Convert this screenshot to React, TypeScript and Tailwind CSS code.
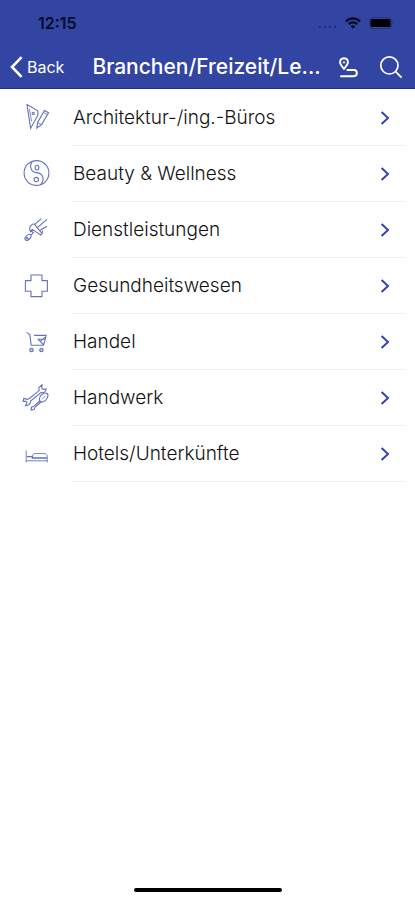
import type { ReactNode } from "react";

interface Category {
  id: number;
  name: string;
  icon: ReactNode;
}

const CATEGORIES: Category[] = [
  {
    id: 1,
    name: "Architektur-/ing.-Büros",
    icon: (
      <>
        <path d="M5 0.6 L15.4 6.6 C16.4 8.4 16.2 10 15.4 12 L8.6 24.4 Z" />
        <path d="M7.4 5 L9.6 17.4" strokeWidth="0.8" />
        <circle cx="11.2" cy="9.4" r="1.1" />
        <path d="M14.8 24 L15.6 18.4 L22.4 6.4 L26.6 8.8 L19.6 20.6 Z" />
        <path d="M15.6 18.4 L19.6 20.6 M21.4 8.4 L25.4 10.6" strokeWidth="0.8" />
      </>
    ),
  },
  {
    id: 2,
    name: "Beauty & Wellness",
    icon: (
      <>
        <circle cx="14.5" cy="13" r="12.4" />
        <path d="M10.6 1.4 C7 5.5 8.5 12 14.5 12.6 C21.5 13.4 23 20 18.6 24.6" />
        <ellipse cx="15" cy="7.6" rx="1.9" ry="2.4" />
        <circle cx="14.3" cy="19.6" r="2.2" />
      </>
    ),
  },
  {
    id: 3,
    name: "Dienstleistungen",
    icon: (
      <>
        <path d="M9.4 9.2 C11.4 7 13.6 8.2 14.2 10.4 L20 17.4 L18.8 19 L10.2 13.4 L8.6 15.6 C7.2 13.4 7.4 11 9.4 9.2 Z" />
        <path d="M12.4 8.6 L19.4 2.6 M15.6 11.4 L25 3.4 M18 14.2 L25 10.2 M20 17.4 L20.6 14.6" />
        <path d="M8.8 15 L11.4 16.6 L9 19.2" />
        <ellipse cx="6" cy="21.4" rx="2.2" ry="3.6" transform="rotate(46 6 21.4)" />
        <circle cx="5.2" cy="22.2" r="0.7" />
      </>
    ),
  },
  {
    id: 4,
    name: "Gesundheitswesen",
    icon: (
      <path d="M9 3 H20 V8.6 H25.4 V19.2 H20 V24.6 H9 V19.2 H3.4 V8.6 H9 Z" strokeLinejoin="round" />
    ),
  },
  {
    id: 5,
    name: "Handel",
    icon: (
      <>
        <path d="M4.6 4.4 L7.8 6.6 L9.2 17.2 H21.4" />
        <path d="M12 7.4 H24.2 L21.6 16.8 L16.2 11.2 H22.6 M18.4 13.4 L23 9.2" />
        <circle cx="9.5" cy="22" r="1.7" fill="currentColor" fillOpacity="0.4" />
        <circle cx="19.4" cy="22" r="1.7" fill="currentColor" fillOpacity="0.4" />
      </>
    ),
  },
  {
    id: 6,
    name: "Handwerk",
    icon: (
      <>
        <path d="M1.8 14.4 L5.4 15.4 L7 14.8 L17.2 6.6 L16.8 3.4 L20 0.8 L19.8 4.2 L21.4 5.4 L24.2 5 C23.6 8 21.6 9 19 8.6 L8.6 17 C8.6 19.8 6.8 21.6 3.4 21.6 L5 18.8 L4.2 17.2 L1.2 17.4 Z" />
        <path d="M17.4 15.2 C17.4 11 22.6 8.2 24.8 9.2 C27.4 10.8 25.2 16.4 20.8 18 C19 18.4 17.4 17.2 17.4 15.2 Z" />
        <path d="M20 15.4 L23.4 11.8" strokeWidth="0.8" />
        <path d="M17.8 17 L12 22.2 M18.8 18 L13 23.4 M12 22.2 L9.4 23.2 L9.2 26 L12 25.6 L13 23.4" />
      </>
    ),
  },
  {
    id: 7,
    name: "Hotels/Unterkünfte",
    icon: (
      <>
        <path d="M4.2 22.4 V10.4 M4.2 20.8 H25.2 M25.2 22.4 V15.6 L23.4 13.6 H12.4 L10.4 15.2" strokeWidth="0.9" />
        <path d="M4.8 16.6 H10.4 V18 H25" strokeWidth="1.3" />
        <path d="M10.4 18 V15.2" strokeWidth="0.9" />
      </>
    ),
  },
];

function StatusBar() {
  return (
    <div className="flex h-[46px] items-center justify-between pl-[38px] pr-5 text-[#080b26]">
      <span className="text-base font-semibold">12:15</span>
      <div className="flex items-center gap-2">
        <svg width="19" height="4" viewBox="0 0 19 4" fill="#222f78" className="mt-2">
          <circle cx="2" cy="2" r="1.2" />
          <circle cx="7" cy="2" r="1.2" />
          <circle cx="12" cy="2" r="1.2" />
          <circle cx="17" cy="2" r="1.2" />
        </svg>
        <svg width="16" height="12" viewBox="0 0 16 12" fill="none" stroke="currentColor" strokeWidth="2.1">
          <path d="M0.9 4.4 C4.9 0.3 11.1 0.3 15.1 4.4" />
          <path d="M3.6 7.2 C6.1 4.8 9.9 4.8 12.4 7.2" />
          <path d="M8 11.8 L5.6 9.3 C7 8 9 8 10.4 9.3 Z" fill="currentColor" stroke="none" />
        </svg>
        <svg width="26" height="12" viewBox="0 0 26 12">
          <rect x="0.5" y="0.5" width="22" height="11" rx="3" fill="none" stroke="#26337f" />
          <rect x="1.5" y="2" width="20" height="8" rx="1.5" fill="#000005" />
          <path d="M23.6 4 C25 4.6 25 7.4 23.6 8 Z" fill="#26337f" />
        </svg>
      </div>
    </div>
  );
}

function NavBar() {
  return (
    <div className="flex h-[42px] items-center pl-[10px] pr-3 text-white">
      <button type="button" className="flex shrink-0 items-center gap-1">
        <svg width="13" height="22" viewBox="0 0 13 22" fill="none" stroke="currentColor" strokeWidth="2.6">
          <path d="M11.6 1.2 L2 11 L11.6 20.8" />
        </svg>
        <span className="text-base">Back</span>
      </button>
      <h1 className="min-w-0 flex-1 truncate pl-7 text-[21px] leading-7 font-medium">Branchen/Freizeit/Le...</h1>
      <div className="flex shrink-0 items-center gap-5">
        <button type="button" aria-label="Route">
          <svg width="22" height="24" viewBox="0 0 22 24" fill="none" stroke="currentColor" strokeWidth="1.9">
            <path d="M7 14 L4.2 10.2 C1.6 6.8 3.6 3.2 7 3.2 C10.4 3.2 12.4 6.8 9.8 10.2 Z" strokeLinejoin="round" />
            <circle cx="7" cy="7.4" r="0.8" strokeWidth="1" />
            <path d="M10.4 15 H17 C20.8 15 20.8 21.2 17 21.2 H4" strokeLinecap="round" />
          </svg>
        </button>
        <button type="button" aria-label="Suche">
          <svg width="24" height="24" viewBox="0 0 24 24" fill="none" stroke="currentColor" strokeWidth="1.7">
            <circle cx="10.4" cy="10.4" r="8.6" />
            <path d="M16.6 16.6 L22.6 22.6" />
          </svg>
        </button>
      </div>
    </div>
  );
}

export default function App() {
  return (
    <div className="flex min-h-screen flex-col bg-white font-['Inter','Liberation_Sans',sans-serif]">
      <header className="border-b border-[#1c2b9b] bg-[#3345a3]">
        <StatusBar />
        <NavBar />
      </header>

      <main className="flex-1">
        <ul className="pt-px">
          {CATEGORIES.map((category) => (
            <li key={category.id}>
              <a href="#" className="flex h-14 items-stretch gap-[23px] pl-[22px] pr-[10px]">
                <svg
                  width="28"
                  height="28"
                  viewBox="0 0 28 28"
                  fill="none"
                  stroke="currentColor"
                  strokeWidth="1.1"
                  className="shrink-0 self-center text-[#6670bd]"
                >
                  {category.icon}
                </svg>
                <span className="flex flex-1 items-center justify-between border-b border-[#f0f0f2] pr-[15px] text-[19px] leading-7 font-light text-[#111113]">
                  {category.name}
                  <svg width="10" height="14" viewBox="0 0 10 14" fill="none" stroke="#2f3fb5" strokeWidth="1.9">
                    <path d="M1.6 1 L8 7 L1.6 13" />
                  </svg>
                </span>
              </a>
            </li>
          ))}
        </ul>
      </main>

      {/* Home indicator */}
      <footer className="flex justify-center pb-2">
        <div className="h-1 w-[148px] rounded-full bg-black" />
      </footer>
    </div>
  );
}
